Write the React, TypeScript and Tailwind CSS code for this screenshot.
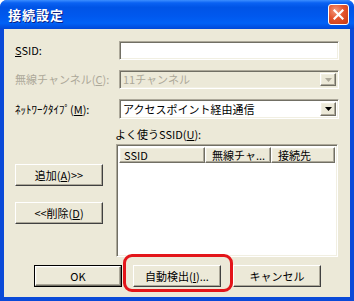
import React from "react";

const sunken =
  "border border-t-[#ACA899] border-l-[#ACA899] border-r-white border-b-white shadow-[inset_1px_1px_0_#716F64,inset_-1px_-1px_0_#F1EFE2]";
const raised =
  "border border-t-white border-l-white border-r-[#716F64] border-b-[#716F64] shadow-[inset_-1px_-1px_0_#ACA899,inset_1px_1px_0_#F1EFE2]";

function Btn({ children, def, className = "" }: { children: React.ReactNode; def?: boolean; className?: string }) {
  if (def) {
    return (
      <div className={`w-[88px] h-[22px] border border-black ${className}`}>
        <div className={`w-full h-full bg-[#ECE9D8] ${raised} flex items-center justify-center text-black`}>{children}</div>
      </div>
    );
  }
  return (
    <div className={`w-[88px] h-[22px] border border-t-white border-l-white border-r-[#404040] border-b-[#404040] bg-[#ECE9D8] shadow-[inset_-1px_-1px_0_#ACA899] flex items-center justify-center text-black ${className}`}>
      {children}
    </div>
  );
}

function Arrow({ disabled }: { disabled?: boolean }) {
  return (
    <div className={`w-[16px] h-full bg-[#ECE9D8] ${raised} flex items-center justify-center`}>
      <svg width="7" height="4" viewBox="0 0 7 4">
        <path d="M0 0H7L3.5 4Z" fill={disabled ? "#ACA899" : "#000"} />
      </svg>
    </div>
  );
}

export default function App() {
  return (
    <div className="w-[354px] h-[301px] bg-[#0A4AD8] rounded-t-[7px] overflow-hidden flex flex-col font-['Noto_Sans_CJK_JP','MS_UI_Gothic',sans-serif] text-[11px] leading-none">
      {/* Title bar */}
      <div className="h-[29px] shrink-0 flex items-center pl-[8px] pr-[5px] bg-[linear-gradient(to_bottom,#3C8EFF_0%,#0A62F3_10%,#0054E6_25%,#0058EE_55%,#0061F6_80%,#0048D8_100%)]">
        <span className="text-white font-bold text-[13px] tracking-[1px] [text-shadow:1px_1px_0_#0A1F86]">接続設定</span>
        <div className="ml-auto mb-[1px] w-[21px] h-[21px] rounded-[3px] border border-white bg-[radial-gradient(circle_at_35%_30%,#F39A7E_0%,#E4542D_45%,#C63A14_100%)] flex items-center justify-center">
          <svg width="11" height="11" viewBox="0 0 11 11">
            <path d="M1.5 1.5L9.5 9.5M9.5 1.5L1.5 9.5" stroke="white" strokeWidth="2.2" strokeLinecap="square" />
          </svg>
        </div>
      </div>
      {/* Body */}
      <div className="flex-1 mx-[4px] mb-[4px] bg-[#ECE9D8] relative pt-[12px] pl-[11px] text-black">
        {/* Row 1 */}
        <div className="flex items-center h-[19px]">
          <div className="w-[104px]"><u>S</u>SID:</div>
          <div className={`w-[220px] h-[19px] bg-white ${sunken}`}></div>
        </div>
        {/* Row 2 */}
        <div className="flex items-center h-[19px] mt-[10px]">
          <div className="w-[104px] text-[#ACA899]">無線チャンネル(<u>C</u>):</div>
          <div className={`w-[220px] h-[19px] bg-[#ECE9D8] ${sunken} flex items-center p-[2px]`}>
            <span className="flex-1 pl-[1px] text-[#ACA899]">11チャンネル</span>
            <Arrow disabled />
          </div>
        </div>
        {/* Row 3 */}
        <div className="flex items-center h-[20px] mt-[10px]">
          <div className="w-[104px]">ﾈｯﾄﾜｰｸﾀｲﾌﾟ(<u>M</u>):</div>
          <div className={`w-[220px] h-[20px] bg-white ${sunken} flex items-center p-[2px]`}>
            <span className="flex-1 pl-[1px]">アクセスポイント経由通信</span>
            <Arrow />
          </div>
        </div>
        {/* Middle */}
        <div className="flex mt-[9px]">
          <div className="flex flex-col w-[88px]">
            <Btn className="mt-[36px]">追加(<u>A</u>)&gt;&gt;</Btn>
            <Btn className="mt-[16px]">&lt;&lt;削除(<u>D</u>)</Btn>
          </div>
          <div className="flex flex-col ml-[12px]">
            <div className="h-[13px] leading-[13px]">よく使うSSID(<u>U</u>):</div>
            <div className={`ml-[1px] mt-[3px] w-[222px] h-[113px] bg-white ${sunken} p-[2px]`}>
              <div className="flex h-[16px]">
                <div className={`w-[86px] h-full bg-[#ECE9D8] ${raised} flex items-center pl-[4px]`}>SSID</div>
                <div className={`w-[66px] h-full bg-[#ECE9D8] ${raised} flex items-center pl-[6px]`}>無線チャ...</div>
                <div className={`w-[64px] h-full bg-[#ECE9D8] ${raised} flex items-center pl-[6px]`}>接続先</div>
              </div>
            </div>
          </div>
        </div>
        {/* Bottom buttons */}
        <div className="flex mt-[8px] ml-[19px]">
          <Btn def>OK</Btn>
          <Btn className="ml-[11px]">自動検出(<u>I</u>)...</Btn>
          <Btn className="ml-[12px]">キャンセル</Btn>
        </div>
        {/* Red highlight */}
        <div className="absolute left-[119px] top-[225px] w-[110px] h-[38px] border-[3px] border-[#E3151A] rounded-[9px] pointer-events-none"></div>
      </div>
    </div>
  );
}
